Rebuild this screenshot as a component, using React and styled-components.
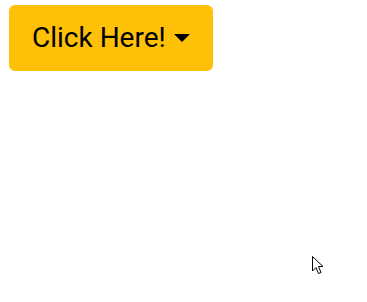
import React from "react";
import styled, { createGlobalStyle } from "styled-components";

const GlobalStyle = createGlobalStyle`
  html, body {
    margin: 0;
    padding: 0;
    background: #ffffff;
    font-family: Roboto, "Liberation Sans", sans-serif;
  }
`;

const Page = styled.div`
  position: relative;
  width: 367px;
  height: 302px;
  padding: 5px 9px;
  box-sizing: border-box;
`;

const DropdownButton = styled.button`
  display: inline-flex;
  align-items: center;
  height: 66px;
  padding: 0 22px;
  background-color: #ffc107;
  border: 1px solid #ffc107;
  border-radius: 6px;
  color: #000000;
  font-family: Roboto, "Liberation Sans", sans-serif;
  font-size: 28px;
  line-height: 1.5;
  cursor: pointer;

  &::after {
    content: "";
    display: inline-block;
    margin-left: 8px;
    border-top: 8px solid #000000;
    border-left: 8px solid transparent;
    border-right: 8px solid transparent;
    border-bottom: 0;
  }
`;

const Cursor = styled.svg`
  position: absolute;
  left: 312px;
  top: 256px;
`;

const App = () => {
  return (
    <>
      <GlobalStyle />
      <Page>
        <DropdownButton>Click Here!</DropdownButton>
        <Cursor width="14" height="20" viewBox="0 0 14 20">
          <path
            d="M0.5 0.5 L0.5 15 L4 11.5 L6.5 17.5 L9 16.5 L6.5 10.5 L11 10.5 Z"
            fill="#ffffff"
            stroke="#000000"
            strokeWidth="1"
          />
        </Cursor>
      </Page>
    </>
  );
};

export default App;
